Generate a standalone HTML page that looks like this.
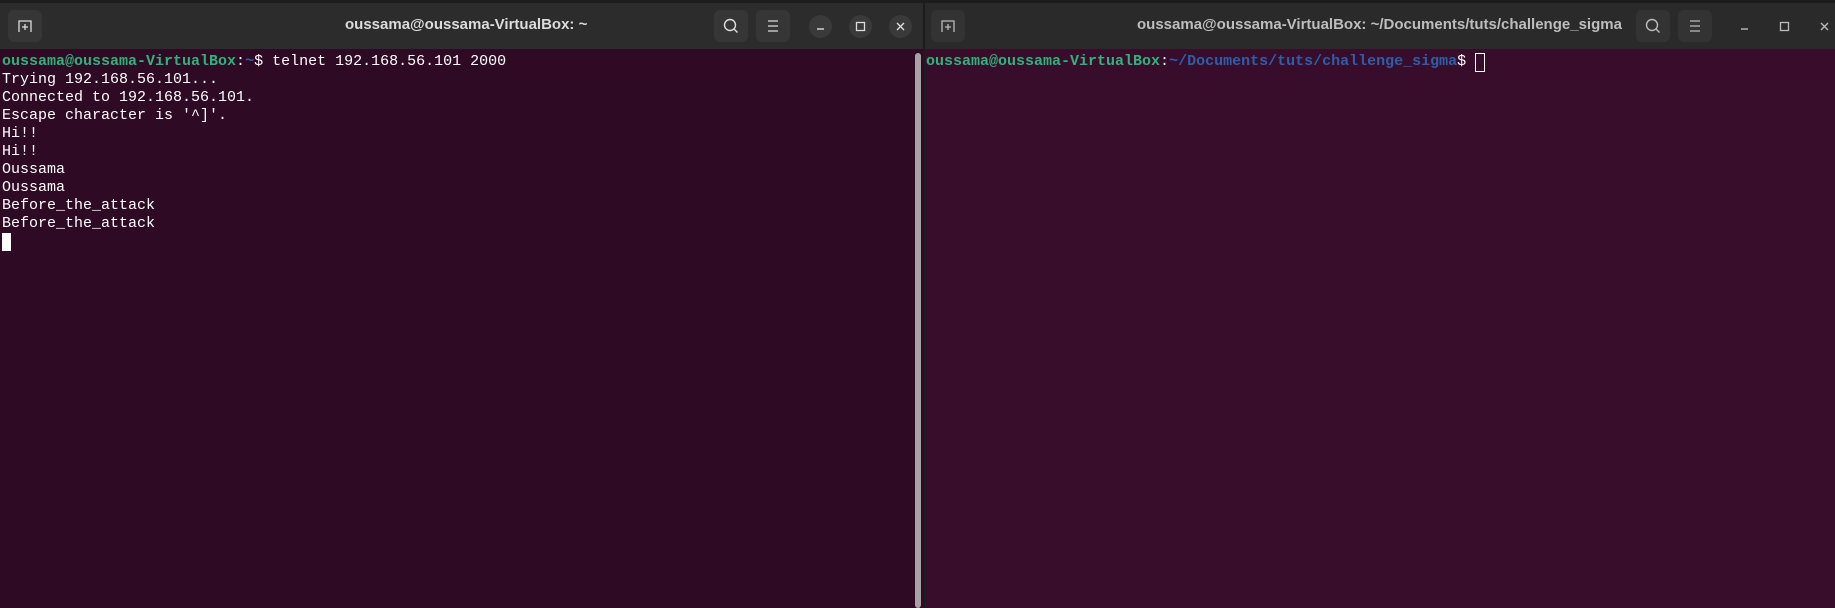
<!DOCTYPE html>
<html><head><style>
*{margin:0;padding:0;box-sizing:border-box}
body{width:1835px;height:608px;background:#1c1c1c;position:relative;overflow:hidden;font-family:"Liberation Sans",sans-serif}
.win{position:absolute;top:3px;bottom:0}
.hdr{position:absolute;left:0;right:0;top:0;height:46px;background:#2c2c2c}
.term{position:absolute;left:0;right:0;top:46px;bottom:0;font-family:"Liberation Mono",monospace;font-size:15px;line-height:18px;color:#fff;padding:4px 0 0 2px;white-space:pre}
.btn{position:absolute;top:7px;width:34px;height:32px;background:#363636;border-radius:6px}
.title{position:absolute;top:13px;font-weight:bold;font-size:15px;color:#dcdcdc}
.circ{position:absolute;top:12px;width:23px;height:23px;border-radius:50%;background:#3a3a3a}
.g{color:#2fb37a;font-weight:bold}
.b{color:#2c5fa8;font-weight:bold}
svg{position:absolute}
</style></head><body>
<div class="win" style="left:0;width:923px">
 <div class="hdr">
  <div class="btn" style="left:8px"></div>
  <svg style="left:8px;top:7px" width="34" height="32"><path d="M11 22V11h12v11M17 14v6M14 17h6" stroke="#ddd" stroke-width="1.3" fill="none"/></svg>
  <div class="title" style="left:345px">oussama@oussama-VirtualBox: ~</div>
  <div class="btn" style="left:714px"></div>
  <svg style="left:714px;top:7px" width="34" height="32"><circle cx="16" cy="15" r="5.5" stroke="#ddd" stroke-width="1.4" fill="none"/><path d="M20 19l3.5 3.5" stroke="#ddd" stroke-width="1.4"/></svg>
  <div class="btn" style="left:756px"></div>
  <svg style="left:756px;top:7px" width="34" height="32"><path d="M12 11h10M12 16h10M12 21h10" stroke="#ddd" stroke-width="1.3"/></svg>
  <div class="circ" style="left:809px"></div>
  <svg style="left:809px;top:12px" width="23" height="23"><path d="M8 14h7" stroke="#ddd" stroke-width="1.4"/></svg>
  <div class="circ" style="left:849px"></div>
  <svg style="left:849px;top:12px" width="23" height="23"><rect x="7.5" y="7.5" width="8" height="8" stroke="#ddd" stroke-width="1.3" fill="none"/></svg>
  <div class="circ" style="left:889px"></div>
  <svg style="left:889px;top:12px" width="23" height="23"><path d="M8 8l7 7M15 8l-7 7" stroke="#ddd" stroke-width="1.4"/></svg>
 </div>
 <div class="term" style="background:#2f0a24"><span class="g">oussama@oussama-VirtualBox</span>:<span class="b">~</span>$ telnet 192.168.56.101 2000
Trying 192.168.56.101...
Connected to 192.168.56.101.
Escape character is '^]'.
Hi!!
Hi!!
Oussama
Oussama
Before_the_attack
Before_the_attack
<span style="display:inline-block;width:9px;height:18px;background:#fff;vertical-align:top"></span></div>
 <div style="position:absolute;left:915px;width:6px;top:50px;bottom:0;background:#a8a2a6;border-radius:3px"></div>
</div>
<div class="win" style="left:925px;width:910px">
 <div class="hdr" style="background:#2a2a2a">
  <div class="btn" style="left:6px;background:#333"></div>
  <svg style="left:6px;top:7px" width="34" height="32"><path d="M11 22V11h12v11M17 14v6M14 17h6" stroke="#bbb" stroke-width="1.3" fill="none"/></svg>
  <div class="title" style="left:212px;color:#bdbdbd">oussama@oussama-VirtualBox: ~/Documents/tuts/challenge_sigma</div>
  <div class="btn" style="left:711px;background:#333"></div>
  <svg style="left:711px;top:7px" width="34" height="32"><circle cx="16" cy="15" r="5.5" stroke="#bbb" stroke-width="1.4" fill="none"/><path d="M20 19l3.5 3.5" stroke="#bbb" stroke-width="1.4"/></svg>
  <div class="btn" style="left:753px;background:#333"></div>
  <svg style="left:753px;top:7px" width="34" height="32"><path d="M12 11h10M12 16h10M12 21h10" stroke="#bbb" stroke-width="1.3"/></svg>
  <svg style="left:808px;top:12px" width="23" height="23"><path d="M8 14h7" stroke="#bbb" stroke-width="1.4"/></svg>
  <svg style="left:848px;top:12px" width="23" height="23"><rect x="7.5" y="7.5" width="8" height="8" stroke="#bbb" stroke-width="1.3" fill="none"/></svg>
  <svg style="left:888px;top:12px" width="23" height="23"><path d="M8 8l7 7M15 8l-7 7" stroke="#bbb" stroke-width="1.4"/></svg>
 </div>
 <div class="term" style="background:#380d2c;padding-left:1px"><span class="g">oussama@oussama-VirtualBox</span>:<span class="b">~/Documents/tuts/challenge_sigma</span>$ <span style="display:inline-block;width:10px;height:19px;border:1px solid #fff;vertical-align:top"></span></div>
</div>
</body></html>
